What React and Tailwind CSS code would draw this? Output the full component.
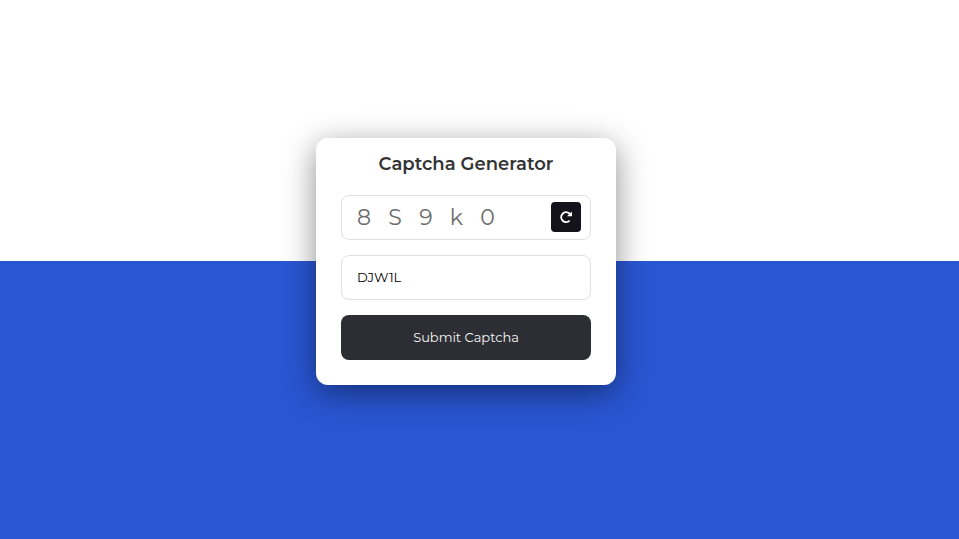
import { useState } from "react";

const captcha = ["8", "S", "9", "k", "0"];

export default function App() {
  const [entry, setEntry] = useState("DJW1L");

  return (
    <div className="flex min-h-screen items-center justify-center bg-[linear-gradient(to_bottom,#ffffff_calc(50%-8px),#2956d3_calc(50%-8px))] pr-[27px] pb-4 font-['Montserrat','Inter','Liberation_Sans',sans-serif]">
      <form
        className="w-full max-w-[300px] rounded-xl bg-white px-[25px] pt-[15px] pb-[25px] shadow-[0_8px_32px_rgba(0,0,0,0.45)]"
        onSubmit={(e) => e.preventDefault()}
      >
        <h1 className="text-center text-[18px] leading-[22px] font-semibold text-[#333333]">
          Captcha Generator
        </h1>
        <div className="mt-5 flex h-[45px] items-start rounded-lg border border-[#e1e1e1] pt-[6px] pr-[9px] pl-[15px]">
          <input
            aria-label="Captcha"
            readOnly
            value={captcha.join("   ")}
            className="h-[30px] min-w-0 flex-1 bg-transparent text-[22px] text-[#6b6b6b] outline-none"
          />
          <button
            type="button"
            aria-label="Refresh captcha"
            className="flex size-[30px] shrink-0 items-center justify-center rounded bg-[#14131b] text-white"
          >
            <svg viewBox="0 0 14 14" className="size-[14px]" fill="none" stroke="currentColor" strokeWidth="2" aria-hidden="true">
              <path d="M10.6 10.6A4.9 4.9 0 1 1 10.4 3.5L11.6 4.7" />
              <path d="M13 1.4V6.2H8Z" fill="currentColor" stroke="none" />
            </svg>
          </button>
        </div>
        <input
          aria-label="Enter captcha"
          value={entry}
          onChange={(e) => setEntry(e.target.value)}
          className="mt-[15px] block h-[45px] w-full rounded-lg border border-[#e1e1e1] bg-white px-[15px] pb-[2px] text-[13px] text-black outline-none"
        />
        <button
          type="submit"
          className="mt-[15px] block h-[45px] w-full rounded-lg bg-[#2d2e33] text-[13px] text-[#f5f5f5]"
        >
          Submit Captcha
        </button>
      </form>
    </div>
  );
}
